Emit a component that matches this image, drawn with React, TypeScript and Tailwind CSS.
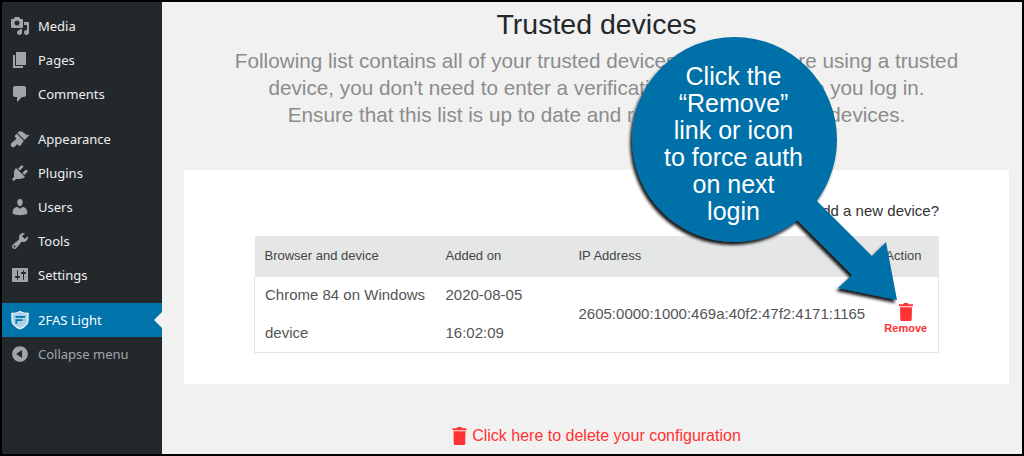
import type { ReactNode } from "react";

const icons: Record<string, string> = {
  media:
    "M13 11V4c0-.55-.45-1-1-1h-1.670L9 1H5L3.670 3H2c-.55 0-1 .45-1 1v7c0 .55.45 1 1 1h10c.55 0 1-.45 1-1zM7 4.500c1.380 0 2.500 1.120 2.500 2.500S8.380 9.500 7 9.500 4.500 8.380 4.500 7 5.620 4.500 7 4.500zM14 6h5v10.500c0 1.380-1.120 2.500-2.500 2.500S14 17.880 14 16.500s1.120-2.500 2.500-2.500c.17 0 .34.02.5.05V9h-3V6zm-4 8.050V13h2v3.500c0 1.380-1.120 2.500-2.500 2.500S7 17.880 7 16.500 8.120 14 9.500 14c.17 0 .34.02.5.05z",
  pages: "M6 15V2h10v13H6zm-1 1h8v2H3V5h2v11z",
  comments: "M5 2h9c1.100 0 2 .9 2 2v7c0 1.100-.9 2-2 2h-2l-5 5v-5H5c-1.100 0-2-.9-2-2V4c0-1.100.9-2 2-2z",
  appearance:
    "M14.480 11.060L7.410 3.990l1.500-1.500c.5-.56 2.300-.47 3.510.32 1.210.8 1.430 1.280 2.910 2.100 1.180.64 2.450 1.260 4.450.85zm-.71.71L6.700 4.700 4.930 6.470c-.39.39-.39 1.020 0 1.410l1.060 1.060c.39.39.39 1.030 0 1.420-.6.6-1.430 1.110-2.210 1.690-.35.26-.7.53-1.010.84C1.430 13.230.28 15.370 1.050 16.900c.76 1.530 2.700 1.750 3.700.75.61-.61 1.340-1.450 1.790-1.890.39-.39 1.020-.39 1.410 0l1.060 1.060c.39.39 1.020.39 1.410 0z",
  plugins:
    "M13.110 4.360L9.870 7.600 8 5.730l3.240-3.240c.35-.34 1.050-.2 1.560.32.52.51.66 1.210.31 1.550zm-8 1.770l.91-1.120 9.010 9.010-1.190.84c-.71.71-2.630 1.160-3.820 1.160H6.140L4.900 17.260c-.59.59-1.540.59-2.120 0-.59-.58-.59-1.530 0-2.120l1.240-1.240v-3.880c0-1.130.4-3.190 1.090-3.890zm7.260 3.970l3.240-3.240c.34-.35 1.040-.21 1.550.31.52.51.66 1.210.31 1.550l-3.240 3.250z",
  users:
    "M10 9.250c-2.270 0-2.730-3.440-2.730-3.440C7 4.020 7.820 2 9.970 2c2.160 0 2.980 2.020 2.710 3.810 0 0-.41 3.440-2.680 3.440zm0 2.570L12.720 10c2.390 0 4.520 2.330 4.520 4.530v2.490s-3.650 1.130-7.240 1.130c-3.650 0-7.240-1.130-7.240-1.130v-2.490c0-2.250 1.940-4.480 4.470-4.480z",
  tools:
    "M16.680 9.770c-1.340 1.340-3.300 1.670-4.950.99l-5.410 6.520c-.99.99-2.590.99-3.580 0s-.99-2.590 0-3.570l6.520-5.420c-.68-1.650-.35-3.610.99-4.950 1.280-1.280 3.120-1.620 4.720-1.060l-2.890 2.890 2.820 2.820 2.860-2.870c.53 1.580.18 3.390-1.080 4.650zM3.810 16.210c.4.39 1.040.39 1.430 0 .4-.4.4-1.040 0-1.430-.39-.4-1.030-.4-1.430 0-.39.39-.39 1.030 0 1.430z",
  settings:
    "M18 16V4c0-.55-.45-1-1-1H3c-.55 0-1 .45-1 1v12c0 .55.45 1 1 1h14c.55 0 1-.45 1-1zM8 11h1c.55 0 1 .45 1 1s-.45 1-1 1H8v1.500c0 .28-.22.5-.5.5s-.5-.22-.5-.5V13H6c-.55 0-1-.45-1-1s.45-1 1-1h1V5.500c0-.28.22-.5.5-.5s.5.22.5.5V11zm5-2h-1c-.55 0-1-.45-1-1s.45-1 1-1h1V5.500c0-.28.22-.5.5-.5s.5.22.5.5V7h1c.55 0 1 .45 1 1s-.45 1-1 1h-1v5.500c0 .28-.22.5-.5.5s-.5-.22-.5-.5V9z",
  collapse:
    "M10 2.160c4.330 0 7.840 3.510 7.840 7.840s-3.510 7.840-7.840 7.840S2.160 14.330 2.160 10 5.710 2.160 10 2.160zm2 11.720V6.120L6.180 9.970z",
};

const menuTop = [
  { id: "media", label: "Media" },
  { id: "pages", label: "Pages" },
  { id: "comments", label: "Comments" },
];
const menuMid = [
  { id: "appearance", label: "Appearance" },
  { id: "plugins", label: "Plugins" },
  { id: "users", label: "Users" },
  { id: "tools", label: "Tools" },
  { id: "settings", label: "Settings" },
];

function Dash({ id }: { id: string }) {
  return (
    <svg viewBox="0 0 20 20" className="w-5 h-5 shrink-0" fill="#a0a5aa">
      <path d={icons[id]} />
    </svg>
  );
}

function MenuRow({ id, children }: { id: string; children: ReactNode }) {
  return (
    <div className="flex items-center h-[34px] pl-[8px] gap-[8px] text-[13px] text-[#eeeeee]">
      <Dash id={id} />
      <span className="pt-[2px]">{children}</span>
    </div>
  );
}

function Trash({ className }: { className: string }) {
  return (
    <svg viewBox="0 0 14 18" className={className} fill="#ff3333">
      <path d="M5 0h4l.6 1.200H14v2H0v-2h4.400zM1 4.200h12l-.3 12.500c0 .8-.6 1.300-1.200 1.300h-9c-.6 0-1.200-.5-1.200-1.300z" />
    </svg>
  );
}

function Callout() {
  return (
    <div className="absolute left-0 top-0 w-[1024px] h-[456px] pointer-events-none">
      <svg width="1024" height="456" className="absolute left-0 top-0">
        <defs>
          <filter id="sh" x="-20%" y="-20%" width="140%" height="140%">
            <feDropShadow dx="-2" dy="3" stdDeviation="1.800" floodColor="#000" floodOpacity="0.9" />
          </filter>
        </defs>
        <g filter="url(#sh)" fill="#036fa8">
          <circle cx="734.500" cy="139.500" r="102.500" />
          <polygon points="806,190 872,256 886,242 897,300 838,288 852,275 790,213" />
        </g>
      </svg>
      <div className="absolute left-[631px] top-[63px] w-[205px] text-center text-white text-[25px] leading-[27px]">
        Click the
        <br />
        “Remove”
        <br />
        link or icon
        <br />
        to force auth
        <br />
        on next
        <br />
        login
      </div>
    </div>
  );
}

export default function App() {
  return (
    <div className="relative w-[1024px] h-[456px] overflow-hidden bg-black pt-[2px] pl-[2px] pr-[2px] pb-[2px] font-['Liberation_Sans',sans-serif]">
      <div className="flex h-full bg-[#f1f1f1] overflow-hidden">
        <aside className="w-[160px] shrink-0 bg-[#23282d] pt-[7px] font-['Noto_Sans',sans-serif]">
          {menuTop.map((m) => (
            <MenuRow key={m.id} id={m.id}>
              {m.label}
            </MenuRow>
          ))}
          <div className="h-[11px]" />
          {menuMid.map((m) => (
            <MenuRow key={m.id} id={m.id}>
              {m.label}
            </MenuRow>
          ))}
          <div className="h-[11px]" />
          <div className="relative flex items-center h-[34px] pl-[8px] gap-[8px] bg-[#0073aa] text-[13px] text-white">
            <svg viewBox="0 0 20 20" className="w-5 h-5 shrink-0">
              <path
                fill="#a9d0e4"
                stroke="#eaf4f9"
                strokeWidth="1.400"
                d="M10 1.500 C12.500 3 15.500 3.500 18 3.500 V10 C18 14.500 14.500 17 10 18.800 C5.500 17 2 14.500 2 10 V3.500 C4.500 3.500 7.500 3 10 1.500 Z"
              />
              <path fill="#0073aa" d="M5.500 6h9.500v1.700H5.500zM5.500 9.300h7v1.700H7.200v2.700H5.500z" />
            </svg>
            <span className="pt-[2px]">2FAS Light</span>
            <span className="absolute right-0 top-[9px] border-y-[8px] border-y-transparent border-r-[8px] border-r-[#f1f1f1]" />
          </div>
          <div className="flex items-center h-[34px] pl-[8px] gap-[8px] text-[13px] text-[#a0a5aa]">
            <Dash id="collapse" />
            <span className="pt-[2px]">Collapse menu</span>
          </div>
        </aside>

        <main className="flex-1 min-w-0 pl-[22px] pr-[13px] pt-[6px] text-center">
          <h1 className="text-[28.500px] leading-[32px] text-[#23282d]">Trusted devices</h1>
          <p className="mt-[7px] w-[780px] mx-auto text-[20.700px] leading-[27px] text-[#8c8c8c]">
            Following list contains all of your trusted devices. When you are using a trusted
            <br />
            device, you don't need to enter a verification code every time you log in.
            <br />
            Ensure that this list is up to date and remove any unknown devices.
          </p>

          <section className="mt-[42px] h-[214px] bg-white px-[70px] text-left">
            <div className="pt-[32px] h-[66px] text-right text-[15px] leading-[18px] text-[#333333]">
              Add a new device?
            </div>
            <table className="w-[685px] table-fixed border-collapse text-[15px] text-[#555555]">
              <thead>
                <tr className="h-[40px] bg-[#e5e7e7] text-[13px] text-[#444444]">
                  <th className="w-[181px] pl-[10px] text-left font-normal">Browser and device</th>
                  <th className="w-[133px] pl-[10px] text-left font-normal">Added on</th>
                  <th className="w-[287px] pl-[10px] text-left font-normal">IP Address</th>
                  <th className="pr-[17px] text-right font-normal">Action</th>
                </tr>
              </thead>
              <tbody>
                <tr className="h-[76px] border border-[#e5e5e5]">
                  <td className="pl-[10px] pb-px leading-[38px]">
                    <div className="-my-px">
                      Chrome 84 on Windows
                      <br />
                      device
                    </div>
                  </td>
                  <td className="pl-[10px] pb-px leading-[38px]">
                    <div className="-my-px">
                      2020-08-05
                      <br />
                      16:02:09
                    </div>
                  </td>
                  <td className="pl-[10px]">2605:0000:1000:469a:40f2:47f2:4171:1165</td>
                  <td className="pt-[9px] pl-[18px]">
                    <div className="flex flex-col items-center">
                      <Trash className="w-[14px] h-[18px]" />
                      <span className="text-[11px] leading-[14px] font-bold text-[#ff3333]">Remove</span>
                    </div>
                  </td>
                </tr>
              </tbody>
            </table>
          </section>

          <div className="mt-[40px] flex items-center justify-center gap-[5px] text-[16px] text-[#ff3333]">
            <Trash className="w-[15px] h-[18px]" />
            <span>Click here to delete your configuration</span>
          </div>
        </main>
      </div>
      <Callout />
    </div>
  );
}
